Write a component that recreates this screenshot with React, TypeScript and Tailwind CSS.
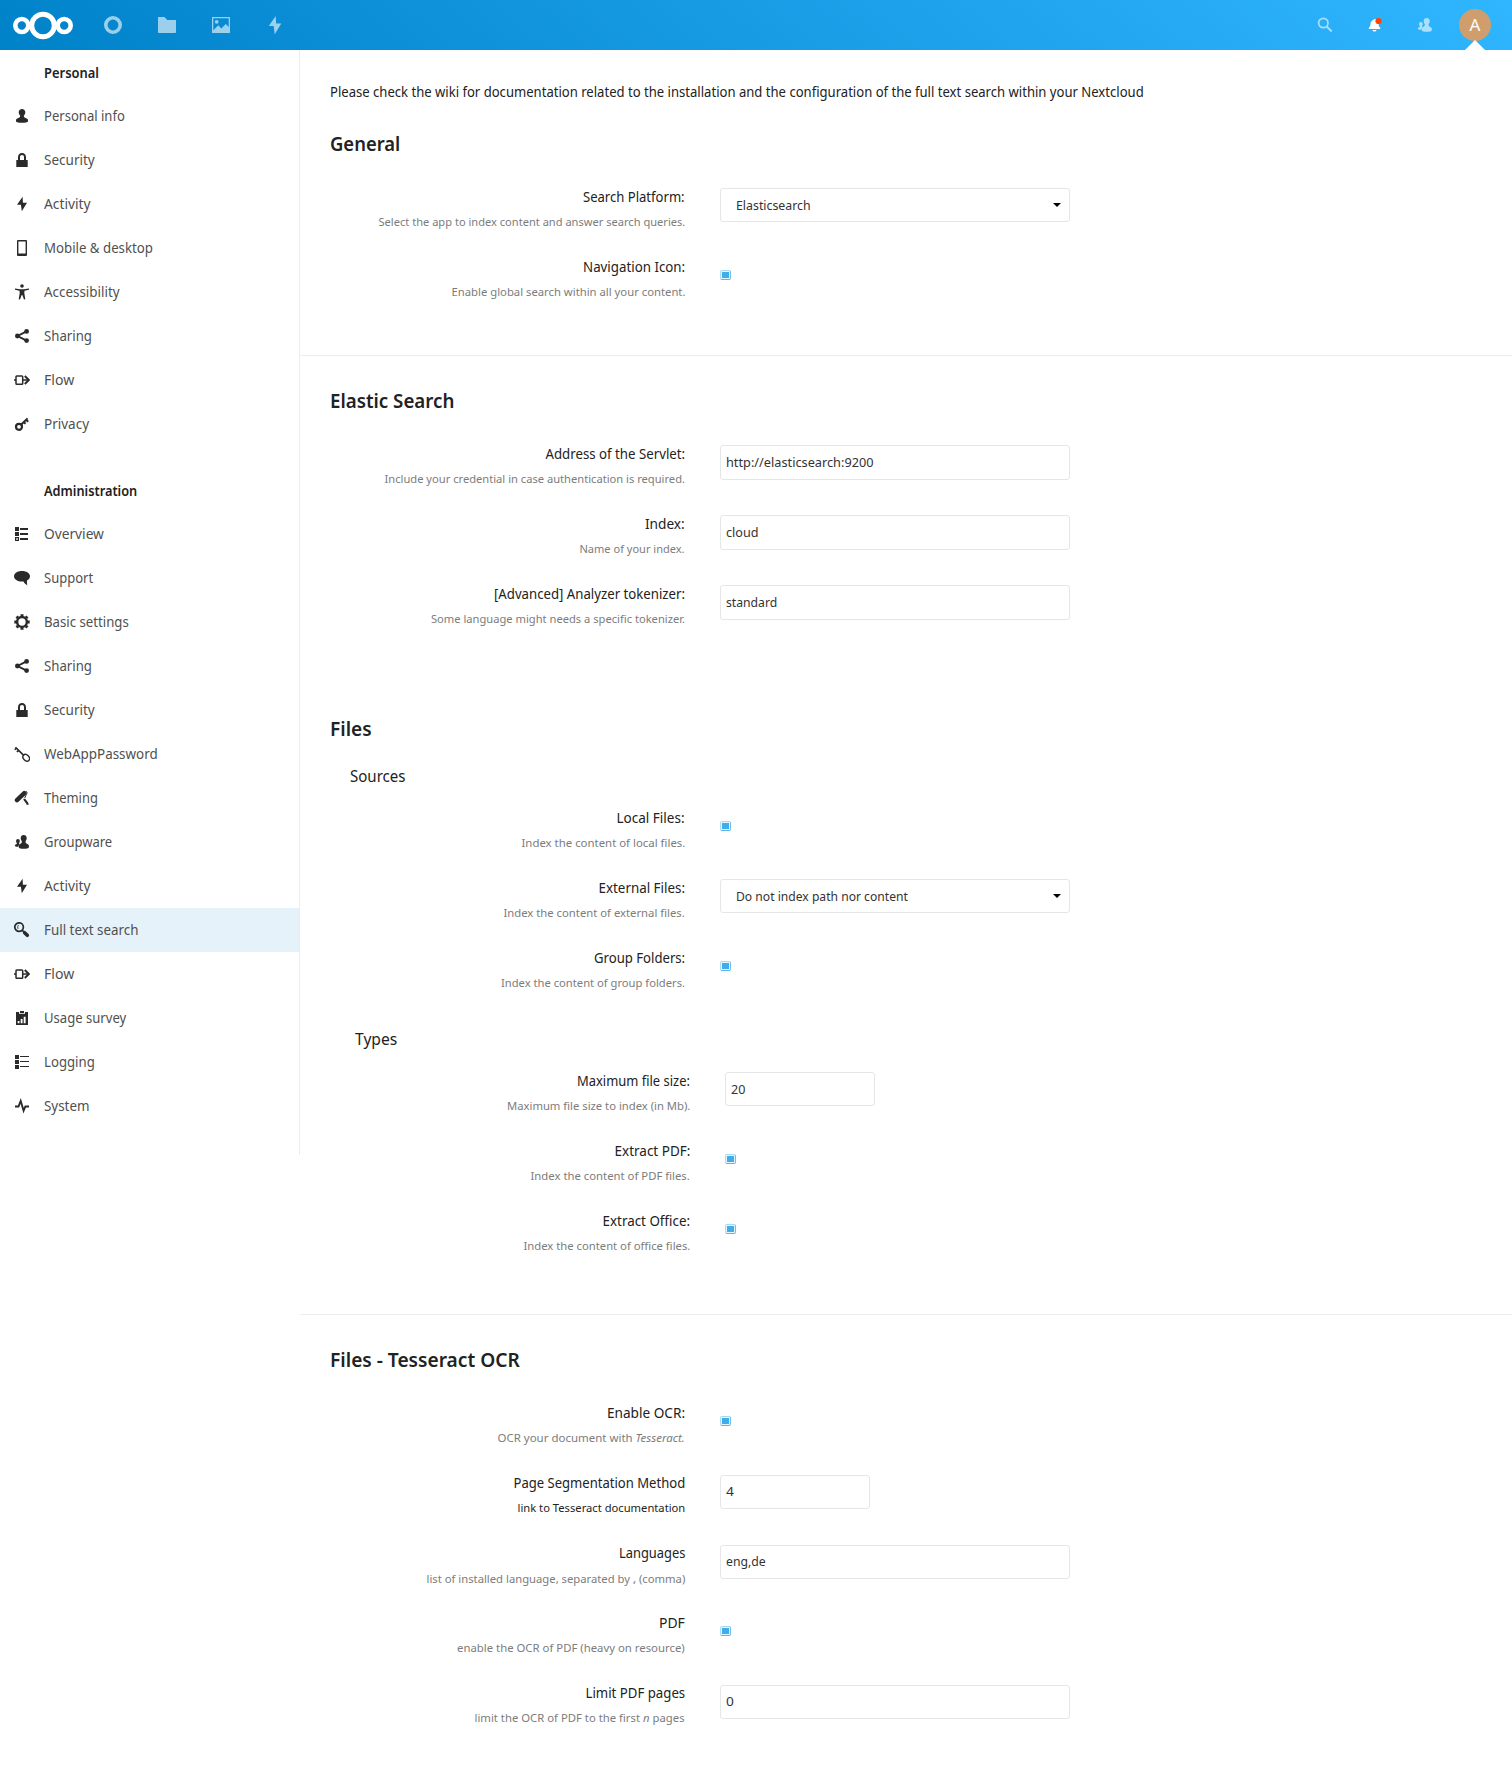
import { useLayoutEffect, useRef, type ReactNode } from "react";

/* Text condensed horizontally to a given width. */
function Fit({ w, right, className = "", children }: { w: number; right?: boolean; className?: string; children: ReactNode }) {
  const ref = useRef<HTMLSpanElement>(null);
  useLayoutEffect(() => {
    const el = ref.current;
    if (el) el.style.transform = `scaleX(${w / el.offsetWidth})`;
  }, [w]);
  return (
    <span ref={ref} className={`inline-block whitespace-nowrap ${right ? "origin-right" : "origin-left"} ${className}`}>
      {children}
    </span>
  );
}

const bolt = <path d="M8.6.7 3 8.8h3.9L7.8 15.300 13 6.700H8.900z" />;
const group = (
  <>
    <path d="M9.700 1C7.900 1 6.700 2.300 6.700 4.100c0 1.600.6 2.500 1.100 3.100.2 1-.1 1.800-.9 2.200C5.600 10 4.700 10.600 4.700 11.800v1.500c.5 2 9.600 2 10.200 0v-1.500c0-1.200-1.100-1.800-2.500-2.400-.8-.4-1-1.200-.8-2.200.500-.6 1.100-1.500 1.100-3.100C12.700 2.300 11.500 1 9.700 1z" />
    <path d="M3.900 5C2.700 5 2.100 5.900 2.100 7c0 1 .3 1.500.7 2 .1.700 0 1-.6 1.300C1.300 10.700.9 11 .9 11.700c0 .8 1.500 1.200 3.200 1.100L5.500 9.900C5 9.700 5 9.400 5.100 9c.4-.5.7-1 .7-2C5.800 5.900 5.200 5 3.900 5z" />
  </>
);

const icons: Record<string, ReactNode> = {
  user: (
    <path d="M8 1C6.100 1 4.700 2.300 4.700 4.300c0 1.600.8 2.500 1.400 3.200.2 1-.1 1.700-1.100 2.200-1.600.7-3 1-3 2.500v1.200c.5 1.900 11.500 1.900 12 0v-1.200c0-1.500-1.400-1.800-3-2.500-1-.5-1.300-1.200-1.100-2.200.6-.7 1.400-1.600 1.400-3.200C11.300 2.300 9.900 1 8 1z" />
  ),
  lock: <path d="M8 1C5.500 1 4 2.800 4 5.200V8H2.300v7h11.400V8H12V5.200C12 2.800 10.500 1 8 1zm0 2c1.400 0 2 .9 2 2.300V8H6V5.300C6 3.900 6.600 3 8 3z" />,
  bolt,
  mobile: (
    <path fillRule="evenodd" d="M4 0h8a1 1 0 0 1 1 1v14a1 1 0 0 1-1 1H4a1 1 0 0 1-1-1V1a1 1 0 0 1 1-1zm.4 1.500v12h7.200v-12z" />
  ),
  accessibility: (
    <>
      <circle cx="8" cy="2" r="1.800" />
      <path d="M1 4.500 6 5.200h4l5-.7v1.200l-4.500 1L10.300 9l1 6.300-1.300.3L8.300 11h-.6L6 15.600l-1.300-.3 1-6.300-.2-2.300L1 5.700z" />
    </>
  ),
  share: (
    <>
      <path d="M12.600 3.300 3.500 8l9.100 4.700" fill="none" stroke="currentColor" strokeWidth="1.900" />
      <circle cx="12.600" cy="3.400" r="2.400" />
      <circle cx="3.400" cy="8" r="2.400" />
      <circle cx="12.600" cy="12.600" r="2.400" />
    </>
  ),
  flow: (
    <>
      <rect x="2" y="3.900" width="6.700" height="8.300" rx=".8" fill="none" stroke="currentColor" strokeWidth="1.500" />
      <path d="M0 7.200h2v1.600H0zM9 7.200h5v1.600H9z" />
      <path d="m10.800 4 4 4-4 4" fill="none" stroke="currentColor" strokeWidth="1.900" />
    </>
  ),
  key: (
    <>
      <circle cx="5" cy="10.800" r="3" fill="none" stroke="currentColor" strokeWidth="2.200" />
      <path d="M7 8.800 13.600 2.400M9.800 6.200l1.800 1.600M12 3.800l2.200 2" fill="none" stroke="currentColor" strokeWidth="2" />
    </>
  ),
  overview: (
    <>
      <path d="M1 1h4v4H1zM1 6h4v4H1zM6 2h8v2H6zM6 7h8v2H6zM6 12h8v2H6z" />
      <path fillRule="evenodd" d="M1 11h4v4H1zm1.200 1.200v1.600h1.600v-1.600z" />
    </>
  ),
  support: <path d="M8 1c4.500 0 8 2.200 8 5.300 0 1.900-1.200 3.400-3 4.300-.1 1.500-.1 3 .3 4.600-1.600-.7-3-2-3.800-3.700-.5.100-1 .100-1.500.100-4.500 0-8-2.200-8-5.300S3.500 1 8 1z" />,
  gear: (
    <>
      <circle cx="8" cy="8" r="4.900" fill="none" stroke="currentColor" strokeWidth="2.500" />
      <path
        d="M8 .3v2.200M8 13.500v2.200M.3 8h2.200M13.500 8h2.200M2.560 2.560l1.500 1.500M11.940 11.940l1.500 1.500M13.440 2.560l-1.500 1.500M4.060 11.940l-1.500 1.500"
        stroke="currentColor"
        strokeWidth="3"
      />
    </>
  ),
  webkey: (
    <g fill="none" stroke="currentColor">
      <ellipse cx="12.200" cy="11.800" rx="3.700" ry="2.800" transform="rotate(45 12.200 11.800)" strokeWidth="1.400" />
      <path d="M9.700 9.400 1.500 1.200M.6 3.700l2.200-1.500M2.800 5.900l2.100-1.600" strokeWidth="1.600" />
    </g>
  ),
  theming: (
    <g fill="none" stroke="currentColor">
      <path d="M3 10.200 10.300 3.100" strokeWidth="4.400" strokeLinecap="round" />
      <path d="M12.300 1.300c1.200.8.8 2-.1 3.500L10.700 8" strokeWidth="1" />
      <path d="M10.300 8.700c0 2 2.700 2.400 3.600 6" strokeWidth="2.100" />
    </g>
  ),
  group,
  search: (
    <g fill="none" stroke="currentColor">
      <circle cx="5.100" cy="5.100" r="4.300" strokeWidth="1.700" />
      <path d="M4.500 3Q3 4.700 4 6.900" strokeWidth=".8" />
      <path d="m8 8 3 3" strokeWidth="1.700" />
      <path d="m10.600 10.700 2.700 2.600" strokeWidth="3.600" strokeLinecap="round" />
    </g>
  ),
  survey: (
    <>
      <path fillRule="evenodd" d="M2 2h3v1.700h6V2h3v13H2zm1.700 9v2.300h1.800V11zm3-2v4.300h1.800V9zm3-2.300v6.600h1.900V6.700z" />
      <path d="M6 1h4v2H6z" />
    </>
  ),
  logging: <path d="M1 1h4v4H1zM1 6h4v4H1zM1 11h4v4H1zM6 2h9v1H6zM6 7h9v1H6zM6 12h9v1H6z" />,
  system: (
    <path d="M1 8.500h3.500L6.700 3l2.900 9.700 1.800-4.200H15" fill="none" stroke="currentColor" strokeWidth="1.900" />
  ),
};

function Icon({ name, className = "size-4" }: { name: string; className?: string }) {
  return (
    <svg viewBox="0 0 16 16" fill="currentColor" className={`shrink-0 ${className}`}>
      {icons[name]}
    </svg>
  );
}

type Item = [icon: string, label: string, width: number];
const personal: Item[] = [
  ["user", "Personal info", 81],
  ["lock", "Security", 50.5],
  ["bolt", "Activity", 47],
  ["mobile", "Mobile & desktop", 108.5],
  ["accessibility", "Accessibility", 76],
  ["share", "Sharing", 47.5],
  ["flow", "Flow", 30],
  ["key", "Privacy", 45],
];
const administration: Item[] = [
  ["overview", "Overview", 59.5],
  ["support", "Support", 49.5],
  ["gear", "Basic settings", 84.5],
  ["share", "Sharing", 47.5],
  ["lock", "Security", 50.5],
  ["webkey", "WebAppPassword", 113.5],
  ["theming", "Theming", 53.5],
  ["group", "Groupware", 68.5],
  ["bolt", "Activity", 47],
  ["search", "Full text search", 94.5],
  ["flow", "Flow", 30],
  ["survey", "Usage survey", 82],
  ["logging", "Logging", 51],
  ["system", "System", 45.5],
];

function NavList({ items }: { items: Item[] }) {
  return (
    <ul>
      {items.map(([icon, label, width]) => (
        <li
          key={label}
          className={`flex h-11 items-center pl-3.5 text-[#2a2a2a] ${label === "Full text search" ? "bg-[#e5f2fa]" : ""}`}
        >
          <Icon name={icon} />
          <a className="ml-3.5 pb-0.5 text-[15px] leading-[22px] text-[#505050]">
            <Fit w={width}>{label}</Fit>
          </a>
        </li>
      ))}
    </ul>
  );
}

function Heading({ w, className, children }: { w: number; className: string; children: ReactNode }) {
  return (
    <h2 className={`h-[30px] text-xl leading-8 font-semibold text-[#222] ${className}`}>
      <Fit w={w}>{children}</Fit>
    </h2>
  );
}

function SubHeading({ w, className, children }: { w: number; className: string; children: ReactNode }) {
  return (
    <h3 className={`mb-3 h-[26px] text-base leading-[26px] text-[#222] ${className}`}>
      <Fit w={w}>{children}</Fit>
    </h3>
  );
}

type RowProps = {
  label: string;
  w: number;
  sub: ReactNode;
  subW: number;
  subClass?: string;
  children: ReactNode;
};

function Row({ label, w, sub, subW, subClass = "text-[#7c7c7c]", children }: RowProps) {
  return (
    <div className="flex h-[70px] items-start">
      <div className="flex w-[355px] flex-col items-end pt-1">
        <div className="h-[25px] text-[15px] leading-[25px] text-[#222]">
          <Fit w={w} right>{label}</Fit>
        </div>
        <div className={`text-[11.5px] leading-[26px] ${subClass}`}>
          <Fit w={subW} right>{sub}</Fit>
        </div>
      </div>
      <div className="ml-[35px]">{children}</div>
    </div>
  );
}

const box = "flex items-center rounded-[3px] border border-[#e6e6e6] bg-white text-[13px] leading-5 text-[#333]";

function Select({ w, children }: { w: number; children: ReactNode }) {
  return (
    <div className={`${box} mt-2 h-[34px] w-[350px] justify-between pr-2 pb-px pl-[15px]`}>
      <Fit w={w}>{children}</Fit>
      <svg viewBox="0 0 8 4" className="h-1 w-2">
        <path d="M0 0h8L4 4z" />
      </svg>
    </div>
  );
}

function Input({ w, className = "mt-2 h-[35px] w-[350px] pb-px", children }: { w: number; className?: string; children: ReactNode }) {
  return (
    <div className={`${box} pl-[5px] ${className}`}>
      <Fit w={w}>{children}</Fit>
    </div>
  );
}

function Check() {
  return (
    <div className="mt-5 flex h-2.5 w-[11px] items-center justify-center rounded-[2px] border border-t-[#a9d8f2] border-r-[#6fbde8] border-b-[#60b5e5] border-l-[#b0daf2] bg-[#e6f4fc]">
      <div className="h-1.5 w-[7px] bg-[#3daee9]" />
    </div>
  );
}

export default function App() {
  return (
    <div className="min-h-[1782px] w-[1512px] bg-white font-['Noto_Sans',sans-serif]">
      <header className="flex h-[50px] items-center justify-between bg-[linear-gradient(40deg,#0082c9_0%,#30b6ff_100%)] text-white">
        <div className="flex items-center">
          <svg viewBox="0 0 62 30" className="ml-3 h-[30px] w-[62px]" fill="none" stroke="currentColor">
            <circle cx="31" cy="15.500" r="11.300" strokeWidth="5" />
            <circle cx="9.800" cy="15.500" r="6.500" strokeWidth="4.600" />
            <circle cx="52.200" cy="15.500" r="6.500" strokeWidth="4.600" />
          </svg>
          <nav className="ml-[29px] flex gap-[34px] opacity-60">
            <svg viewBox="0 0 20 20" className="size-5" fill="none" stroke="currentColor">
              <circle cx="10" cy="10" r="7.200" strokeWidth="3.600" />
            </svg>
            <svg viewBox="0 0 20 20" className="size-5" fill="currentColor">
              <path d="M1.500 2h6l2.700 3H19v12.200a.8.8 0 0 1-.8.8H1.800a.8.800 0 0 1-.8-.8V2.500a.5.500 0 0 1 .5-.5z" />
            </svg>
            <svg viewBox="0 0 20 20" className="size-5" fill="currentColor">
              <path fillRule="evenodd" d="M1.500 2h17a.5.500 0 0 1 .5.500v15a.5.500 0 0 1-.5.500h-17a.5.500 0 0 1-.5-.5v-15a.5.500 0 0 1 .5-.5zM2.300 3.300v12l5-5 3 3.200 4.500-4.500 2.900 3V3.300z" />
              <circle cx="5.700" cy="6.800" r="1.900" />
            </svg>
            <svg viewBox="0 0 16 16" className="size-5" fill="currentColor">
              {bolt}
            </svg>
          </nav>
        </div>
        <div className="flex items-center pr-[21px]">
          <svg viewBox="0 0 16 16" className="size-4 opacity-60" fill="none" stroke="currentColor">
            <circle cx="6.300" cy="6" r="4.700" strokeWidth="1.700" />
            <path d="m9.700 9.500 5 5" strokeWidth="2" />
          </svg>
          <svg viewBox="0 0 16 16" className="ml-[34px] size-4" fill="currentColor">
            <path d="M7.500 2c-.7 0-1 .4-1 1C4.500 3.500 3.700 5 3.500 7c-.2 2-.5 2.700-1.700 3.700v1.200h11.400v-1.200C12 9.700 11.700 9 11.500 7L11 2.500zM5.500 13a2 1.500 0 0 0 4 0z" />
            <circle cx="11.500" cy="4" r="3.100" fill="#ff4402" />
          </svg>
          <Icon name="group" className="ml-[34px] size-4 opacity-60" />
          <div className="relative ml-[26px] flex h-[50px] w-8 items-center justify-center">
            <div className="flex size-8 items-center justify-center rounded-full bg-[#d09e6d] text-[17px] leading-8">
              <Fit w={11}>A</Fit>
            </div>
            <svg viewBox="0 0 20 10" className="absolute bottom-0 left-1.5 h-2.5 w-5" fill="white">
              <path d="M10 0 20 10H0z" />
            </svg>
          </div>
        </div>
      </header>

      <div className="flex items-start">
        <aside className="h-[1105px] w-[300px] shrink-0 border-r border-[#ededed]">
          <h3 className="h-11 pl-11 text-sm leading-[46px] font-semibold text-[#222]">
            <Fit w={55.5}>Personal</Fit>
          </h3>
          <NavList items={personal} />
          <h3 className="mt-[22px] h-11 pl-11 text-sm leading-[46px] font-semibold text-[#222]">
            <Fit w={93}>Administration</Fit>
          </h3>
          <NavList items={administration} />
        </aside>

        <main className="grow">
          <section className="border-b border-[#ededed] px-[30px] pt-7 pb-[35px]">
            <p className="h-[26px] text-[15px] leading-[26px] text-[#222]">
              <Fit w={813.5}>
                Please check the wiki for documentation related to the installation and the configuration of the full text
                search within your Nextcloud
              </Fit>
            </p>
            <Heading w={70} className="mt-6 mb-[22px]">General</Heading>
            <Row label="Search Platform:" w={102} sub="Select the app to index content and answer search queries." subW={306.5}>
              <Select w={75}>Elasticsearch</Select>
            </Row>
            <Row label="Navigation Icon:" w={102} sub="Enable global search within all your content." subW={233.5}>
              <Check />
            </Row>
          </section>

          <section className="px-[30px] pt-[29px]">
            <Heading w={124.5} className="mb-[22px]">Elastic Search</Heading>
            <Row label="Address of the Servlet:" w={139.5} sub="Include your credential in case authentication is required." subW={300.5}>
              <Input w={148}>http://elasticsearch:9200</Input>
            </Row>
            <Row label="Index:" w={40} sub="Name of your index." subW={105.5}>
              <Input w={33}>cloud</Input>
            </Row>
            <Row label="[Advanced] Analyzer tokenizer:" w={191} sub="Some language might needs a specific tokenizer." subW={254}>
              <Input w={51.5}>standard</Input>
            </Row>
          </section>

          <section className="border-b border-[#ededed] px-[30px] pt-[66px] pb-10">
            <Heading w={42} className="mb-5">Files</Heading>
            <SubHeading w={55.5} className="ml-5">Sources</SubHeading>
            <Row label="Local Files:" w={68.5} sub="Index the content of local files." subW={163.5}>
              <Check />
            </Row>
            <Row label="External Files:" w={86.5} sub="Index the content of external files." subW={181.5}>
              <Select w={171.5}>Do not index path nor content</Select>
            </Row>
            <Row label="Group Folders:" w={91} sub="Index the content of group folders." subW={184}>
              <Check />
            </Row>
            <div className="ml-[5px] pt-[15px]">
              <SubHeading w={42} className="ml-5">Types</SubHeading>
              <Row label="Maximum file size:" w={113} sub="Maximum file size to index (in Mb)." subW={183}>
                <Input w={14.5} className="mt-2 h-[34px] w-[150px]">20</Input>
              </Row>
              <Row label="Extract PDF:" w={75.5} sub="Index the content of PDF files." subW={159.5}>
                <Check />
              </Row>
              <Row label="Extract Office:" w={87.5} sub="Index the content of office files." subW={166.5}>
                <Check />
              </Row>
            </div>
          </section>

          <section className="px-[30px] pt-[29px]">
            <Heading w={189.5} className="mb-[22px]">Files - Tesseract OCR</Heading>
            <Row label="Enable OCR:" w={78} sub={<>OCR your document with <em>Tesseract.</em></>} subW={187.5}>
              <Check />
            </Row>
            <Row label="Page Segmentation Method" w={171.5} sub="link to Tesseract documentation" subW={167.5} subClass="text-[#222]">
              <Input w={7.4} className="mt-[9px] h-[34px] w-[150px] pb-0.5">4</Input>
            </Row>
            <Row
              label="Languages"
              w={66}
              sub={<>list of installed language, separated by <b className="font-medium">,</b> (comma)</>}
              subW={258.5}
              subClass="pt-px text-[#7c7c7c]"
            >
              <Input w={39.5} className="mt-[9px] h-[34px] w-[350px] pb-0.5">eng,de</Input>
            </Row>
            <Row label="PDF" w={26} sub="enable the OCR of PDF (heavy on resource)" subW={228}>
              <Check />
            </Row>
            <Row label="Limit PDF pages" w={99.5} sub={<>limit the OCR of PDF to the first <em>n</em> pages</>} subW={210.5}>
              <Input w={7.4} className="mt-[9px] h-[34px] w-[350px] pb-0.5">0</Input>
            </Row>
          </section>
        </main>
      </div>
    </div>
  );
}
